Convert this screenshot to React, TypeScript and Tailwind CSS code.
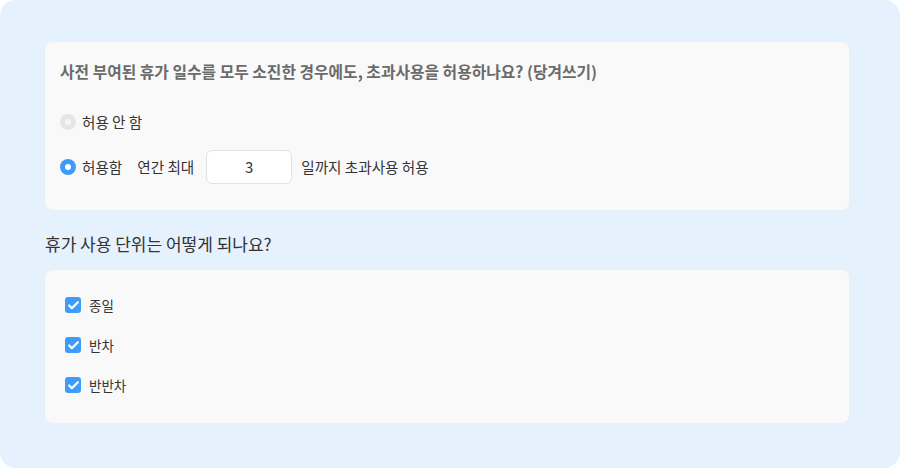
import { Check } from "lucide-react";

const font = { fontFamily: '"Noto Sans CJK KR", "Noto Sans", sans-serif' };

const Radio = ({ checked }: { checked: boolean }) =>
  checked ? (
    <span className="flex h-4 w-4 items-center justify-center rounded-full bg-[#3d9bfb]">
      <span className="h-1.5 w-1.5 rounded-full bg-white" />
    </span>
  ) : (
    <span className="flex h-4 w-4 items-center justify-center rounded-full bg-[#e6e6e6]">
      <span className="h-1.5 w-1.5 rounded-full bg-[#f5f5f5]" />
    </span>
  );

const CheckBox = () => (
  <span className="flex h-4 w-4 items-center justify-center rounded-[3px] bg-[#3d9bfb]">
    <Check className="h-[13px] w-[13px] text-white" strokeWidth={4} />
  </span>
);

export default function App() {
  const units = ["종일", "반차", "반반차"];

  return (
    <div style={font} className="h-[468px] w-[900px] rounded-2xl bg-[#e5f1fd] pl-[45px] pr-[51px] pt-[42px]">
      {/* 초과사용 */}
      <div className="flex flex-col rounded-lg bg-[#f9f9f9] px-[15px] pb-[26px] pt-5">
        <div className="text-[15.8px] font-semibold leading-5 text-[#6b6b6b]">
          사전 부여된 휴가 일수를 모두 소진한 경우에도, 초과사용을 허용하나요? (당겨쓰기)
        </div>
        <div className="mt-7 flex h-6 items-center gap-1.5 text-[14.6px] text-[#333]">
          <Radio checked={false} />
          <span>허용 안 함</span>
        </div>
        <div className="mt-4 flex h-[34px] items-center text-[14.6px] text-[#333]">
          <Radio checked />
          <span className="ml-1.5">허용함</span>
          <span className="ml-[15px]">연간 최대</span>
          <div className="ml-3 flex h-[34px] w-[86px] items-center justify-center rounded-md border border-[#e2e2e2] bg-white text-[15px] text-[#333]">
            3
          </div>
          <span className="ml-[9px]">일까지 초과사용 허용</span>
        </div>
      </div>

      {/* 사용 단위 */}
      <div className="mt-6 text-[17px] font-normal leading-5 text-[#333]">휴가 사용 단위는 어떻게 되나요?</div>
      <div className="mt-4 flex flex-col gap-5 rounded-lg bg-[#f9f9f9] px-5 pb-7 pt-[25px]">
        {units.map((u) => (
          <div key={u} className="flex h-5 items-center gap-2 text-[13.5px] text-[#333]">
            <CheckBox />
            <span>{u}</span>
          </div>
        ))}
      </div>
    </div>
  );
}
